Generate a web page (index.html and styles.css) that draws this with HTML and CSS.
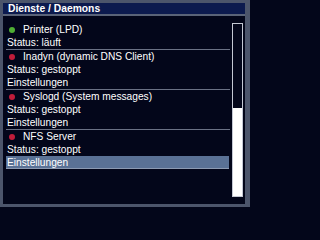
FILE: index.html
```html
<!DOCTYPE html>
<html>
<head>
<meta charset="utf-8">
<link rel="stylesheet" href="styles.css">
</head>
<body>
<div class="frame">
  <div class="title">Dienste / Daemons</div>
  <div class="title-line"></div>
  <div class="content">
    <div class="list">
      <div class="item">
        <div class="row"><span class="dot on"></span>Printer (LPD)</div>
        <div class="row">Status: läuft</div>
      </div>
      <div class="item">
        <div class="row"><span class="dot off"></span>Inadyn (dynamic DNS Client)</div>
        <div class="row">Status: gestoppt</div>
        <div class="row">Einstellungen</div>
      </div>
      <div class="item">
        <div class="row"><span class="dot off"></span>Syslogd (System messages)</div>
        <div class="row">Status: gestoppt</div>
        <div class="row">Einstellungen</div>
      </div>
      <div class="item last">
        <div class="row"><span class="dot off"></span>NFS Server</div>
        <div class="row">Status: gestoppt</div>
        <div class="row selected">Einstellungen</div>
      </div>
    </div>
    <div class="scrollbar"><div class="thumb"></div></div>
  </div>
</div>
</body>
</html>
```
FILE: styles.css
```css
html, body {
  margin: 0;
  padding: 0;
  background: #03061a;
}
.frame {
  width: 242px;
  height: 201px;
  border-style: solid;
  border-color: #4c556b;
  border-width: 3px 5px 3px 3px;
  background: #03061a;
  display: flex;
  flex-direction: column;
  font-family: "Liberation Sans", Arial, sans-serif;
  color: #ffffff;
}
.title {
  height: 11px;
  line-height: 12px;
  background: #0c1a4e;
  padding-left: 5px;
  font-weight: bold;
  font-size: 10.3px;
}
.title-line {
  height: 2px;
  background: #5a6378;
}
.content {
  flex: 1;
  display: flex;
  padding: 7px 2px 0 3px;
  gap: 2px;
}
.list {
  width: 224px;
}
.item {
  border-bottom: 1px solid #6a7184;
}
.item.last {
  border-bottom: none;
}
.row {
  height: 13px;
  line-height: 13px;
  font-size: 10.2px;
  display: flex;
  align-items: center;
  white-space: nowrap;
  padding-left: 1px;
}
.row.selected {
  background: #5a7195;
  height: 12px;
  border-bottom: 1px solid #8c9ab2;
  margin-right: 1px;
}
.dot {
  width: 6px;
  height: 6px;
  border-radius: 50%;
  margin: 0 8px 0 2px;
}
.dot.on {
  background: #4fae34;
}
.dot.off {
  background: #c01c3a;
}
.scrollbar {
  width: 9px;
  height: 172px;
  border: 1px solid #c4c8d4;
  display: flex;
  flex-direction: column;
  justify-content: flex-end;
}
.thumb {
  height: 88px;
  background: #ffffff;
}
```
